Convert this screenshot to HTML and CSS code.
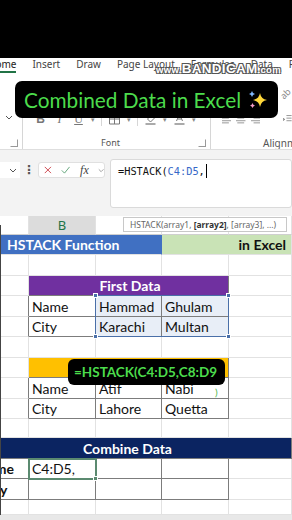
FILE: index.html
```html
<!DOCTYPE html>
<html lang="en">
<head>
<meta charset="utf-8">
<title>HSTACK Function in Excel</title>
<link rel="stylesheet" href="styles.css">
</head>
<body>
<div class="screen">

  <div class="topbar"></div>

  <nav class="tabs">
    <span class="tab on">Home</span>
    <span class="tab">Insert</span>
    <span class="tab">Draw</span>
    <span class="tab">Page Layout</span>
    <span class="tab">Formulas</span>
    <span class="tab">Data</span>
    <span class="tab">Review</span>
  </nav>
  <div class="watermark">www.<b>BANDICAM</b>.com</div>

  <div class="ribbon">
    <div class="group g-clip">
      <div class="g-top">
        <svg class="chev" width="8" height="5" viewBox="0 0 8 5"><path d="M1 1l3 3 3-3" fill="none" stroke="#555" stroke-width="1"/></svg>
      </div>
      <div class="glabel"><span class="launcher"></span></div>
    </div>
    <div class="group g-font">
      <div class="g-top">
        <div class="icons">
          <span class="ic bold">B</span>
          <span class="ic ital">I</span>
          <span class="ic undl">U</span>
          <span class="caret">&#9662;</span>
          <span class="vsep"></span>
          <svg class="ic" width="12" height="12" viewBox="0 0 12 12"><path d="M1 1h10v10H1zM6 1v10M1 6h10" fill="none" stroke="#777"/></svg>
          <span class="caret">&#9662;</span>
          <span class="vsep"></span>
          <svg class="ic" width="12" height="12" viewBox="0 0 12 12"><path d="M3 6l4-4 3 3-4 4z" fill="none" stroke="#777"/><rect x="1" y="10" width="10" height="2" fill="#aaa"/></svg>
          <span class="caret">&#9662;</span>
          <svg class="ic" width="12" height="12" viewBox="0 0 12 12"><path d="M3 8l3-7 3 7M4 6h4" fill="none" stroke="#777"/><rect x="1" y="10" width="10" height="2" fill="#aaa"/></svg>
          <span class="caret">&#9662;</span>
        </div>
      </div>
      <div class="glabel"><span class="gname">Font</span><span class="launcher"></span></div>
    </div>
    <div class="group g-align">
      <div class="g-top">
        <span class="orient">ab</span>
        <div class="icons">
          <svg width="11" height="10" viewBox="0 0 11 10"><path d="M0 1h11M0 4h8M0 7h11M0 9.5h8" stroke="#888"/></svg>
          <svg width="11" height="10" viewBox="0 0 11 10"><path d="M0 1h11M1.5 4h8M0 7h11M1.5 9.5h8" stroke="#888"/></svg>
          <svg width="11" height="10" viewBox="0 0 11 10"><path d="M0 1h11M3 4h8M0 7h11M3 9.5h8" stroke="#888"/></svg>
          <svg class="indent" width="10" height="10" viewBox="0 0 10 10"><path d="M4 1h6M4 4h6M4 7h6M0 4l2 1.5-2 1.5M2 5.5H0" fill="none" stroke="#888"/></svg>
        </div>
      </div>
      <div class="glabel"><span class="aname">Alignment</span></div>
    </div>
  </div>

  <div class="fbar">
    <div class="namebox">
      <svg width="8" height="5" viewBox="0 0 8 5"><path d="M1 1l3 3 3-3" fill="none" stroke="#555" stroke-width="1"/></svg>
    </div>
    <div class="dots">&#8942;</div>
    <div class="fxbox">
      <svg width="10" height="10" viewBox="0 0 10 10"><path d="M1 1l8 8M9 1l-8 8" stroke="#c8343c" stroke-width="1.1"/></svg>
      <svg width="12" height="10" viewBox="0 0 12 10"><path d="M1 5.5l3.5 3.5L11 1" fill="none" stroke="#4f9a6a" stroke-width="1.1"/></svg>
      <span class="fx">fx</span>
      <svg width="8" height="5" viewBox="0 0 8 5"><path d="M1 1l3 3 3-3" fill="none" stroke="#888" stroke-width="1"/></svg>
    </div>
    <div class="finput">=HSTACK(<span class="ref">C4:D5</span>,<span class="caretline"></span></div>
  </div>

  <div class="sheet">
    <div class="grid">
      <div class="hd"></div>
      <div class="hd on">B</div>
      <div class="hd"></div>
      <div class="hd"></div>
      <div class="hd"></div>

      <div class="blue">HSTACK Function</div>
      <div class="lime">in Excel</div>

      <div></div><div></div><div></div><div></div><div></div>

      <div></div>
      <div class="purple dk">First Data</div>
      <div></div>

      <div class="dr"></div>
      <div class="dk">Name</div>
      <div class="dk sel">Hammad</div>
      <div class="dk sel">Ghulam</div>
      <div></div>

      <div class="dr"></div>
      <div class="dk">City</div>
      <div class="dk sel">Karachi</div>
      <div class="dk sel">Multan</div>
      <div></div>

      <div></div><div></div><div></div><div></div><div></div>

      <div></div>
      <div class="yellow dk"></div>
      <div></div>

      <div class="dr"></div>
      <div class="dk">Name</div>
      <div class="dk">Atif</div>
      <div class="dk">Nabi</div>
      <div></div>

      <div class="dr"></div>
      <div class="dk">City</div>
      <div class="dk">Lahore</div>
      <div class="dk">Quetta</div>
      <div></div>

      <div></div><div></div><div></div><div></div><div></div>

      <div class="navy dk">Combine Data</div>

      <div class="dk strong"><span class="cut-name">Name</span></div>
      <div class="dk">C4:D5,</div>
      <div class="dk"></div>
      <div class="dk"></div>
      <div></div>

      <div class="dk strong"><span class="cut-city">City</span></div>
      <div class="dk"></div>
      <div class="dk"></div>
      <div class="dk"></div>
      <div></div>

      <div></div><div></div><div></div><div></div><div></div>
    </div>

    <div class="tip">HSTACK(array1, <b>[array2]</b>, [array3], ...)</div>
    <div class="selection"><i class="h tl"></i><i class="h tr"></i><i class="h bl"></i><i class="h br"></i></div>
    <div class="active"><i class="h br"></i></div>
    <div class="pill small">=HSTACK(C4:D5,C8:D9</div>
    <div class="paren">)</div>
  </div>
  <div class="sheetbar"></div>

  <div class="pill title">
    Combined Data in Excel
    <svg class="sparkle" width="20" height="20" viewBox="0 0 20 20">
      <path d="M12 3Q13 9 19 10Q13 11 12 17Q11 11 5 10Q11 9 12 3Z" fill="#ffd83b"/>
      <path d="M4 1Q4.5 3.5 7 4Q4.5 4.5 4 7Q3.5 4.5 1 4Q3.5 3.5 4 1Z" fill="#80b8ff"/>
      <path d="M4.5 13Q5 15 7 15.5Q5 16 4.5 18Q4 16 2 15.5Q4 15 4.5 13Z" fill="#f29ac6"/>
    </svg>
  </div>

</div>
</body>
</html>
```

FILE: styles.css
```css
body {
margin: 0;
background: #fff;
}

.screen {
position: relative;
width: 292px;
height: 520px;
overflow: hidden;
background: #fff;
font-family: Lato, "Liberation Sans", sans-serif;
color: #111;
}

.topbar {
height: 58px;
background: #000;
}

/* ribbon tabs */
.tabs {
height: 15px;
display: flex;
gap: 16px;
margin-left: -12px;
font: 10px "Noto Sans", sans-serif;
color: #444;
white-space: nowrap;
}
.tab {
line-height: 13px;
}
.tab.on {
color: #222;
border-bottom: 2px solid #217346;
}

.watermark {
position: absolute;
left: 156px;
top: 61px;
font: bold 9.5px "Liberation Sans", sans-serif;
color: #fff;
letter-spacing: 0.3px;
text-shadow: 1px 1px 0 #555, -1px -1px 0 #555, 1px -1px 0 #555, -1px 1px 0 #555;
}
.watermark b {
font-size: 13.5px;
}

.ribbon {
height: 77px;
box-sizing: border-box;
padding-top: 10px;
display: flex;
border-bottom: 1px solid #dedede;
}
.group {
display: flex;
flex-direction: column;
flex-shrink: 0;
border-right: 1px solid #d6d6d6;
box-sizing: border-box;
}
.g-clip { width: 23px; }
.g-font { width: 188px; }
.g-align {
flex: 1;
min-width: 0;
overflow: hidden;
border-right: 0;
}

.g-top {
flex: 1;
position: relative;
display: flex;
flex-direction: column;
justify-content: flex-end;
}
.glabel {
height: 13px;
display: flex;
align-items: center;
font: 9px "Noto Sans", sans-serif;
color: #555;
white-space: nowrap;
}

.chev {
margin: 0 0 16px 5px;
}
.g-clip .glabel {
justify-content: flex-end;
padding-right: 4px;
}
.launcher {
width: 6px;
height: 6px;
border: 1px solid #999;
border-top-color: transparent;
border-left-color: transparent;
}

.icons {
height: 14px;
margin-bottom: 10px;
display: flex;
align-items: center;
gap: 6px;
padding-left: 11px;
color: #777;
}
.ic {
width: 13px;
text-align: center;
font: 12px "Liberation Serif", serif;
}
.bold { font: bold 12px "Liberation Sans", sans-serif; }
.ital { font-style: italic; }
.undl { text-decoration: underline; }
.caret {
font-size: 7px;
color: #888;
}
.vsep {
width: 1px;
height: 14px;
background: #d6d6d6;
}

.gname {
flex: 1;
text-align: center;
}
.g-font .launcher {
margin-right: 4px;
}

.g-align .icons {
padding-left: 11px;
gap: 5px;
}
.g-align .indent {
margin-left: 18px;
}
.orient {
position: absolute;
right: 1px;
top: 4px;
font: 9px "Noto Sans", sans-serif;
color: #888;
transform: rotate(-45deg);
}
.aname {
padding-left: 52px;
font-size: 10px;
}

/* formula bar */
.fbar {
height: 66px;
box-sizing: border-box;
padding-top: 9px;
display: flex;
align-items: flex-start;
background: #f3f3f3;
}
.namebox {
width: 20px;
height: 16px;
margin-top: 3px;
display: flex;
align-items: center;
justify-content: center;
padding-left: 6px;
box-sizing: border-box;
background: #fff;
}
.dots {
width: 18px;
text-align: center;
font: bold 12px "DejaVu Sans", sans-serif;
color: #555;
line-height: 22px;
}
.fxbox {
width: 67px;
height: 16px;
margin-top: 3px;
box-sizing: border-box;
display: flex;
align-items: center;
gap: 9px;
padding-left: 5px;
background: #fff;
border: 1px solid #e0e0e0;
border-radius: 3px;
}
.fx {
font: italic 12px "Liberation Serif", serif;
color: #444;
margin-left: 1px;
}
.finput {
flex: 1;
margin-left: 5px;
height: 49px;
box-sizing: border-box;
padding: 4px 0 0 7px;
background: #fff;
border: 1px solid #dadada;
border-radius: 3px;
font: 10.3px "DejaVu Sans Mono", monospace;
line-height: 14px;
color: #111;
white-space: nowrap;
}
.ref {
color: #3567c8;
}
.caretline {
display: inline-block;
width: 1px;
height: 14px;
background: #000;
vertical-align: -3px;
margin-left: 1px;
}

/* worksheet */
.sheet {
position: relative;
}
.sheet::before {
content: "";
position: absolute;
left: 0;
top: 9px;
bottom: 0;
width: 1px;
background: #444;
z-index: 2;
}
.grid {
display: grid;
grid-template-columns: 29px 67px 66px 67px 63px;
grid-template-rows: 19px 20px 21px 20px 21px 20px 21px 20px 21px 20px 19px 21px 20px 21px 15px;
font-size: 14px;
}
.grid > div {
display: flex;
align-items: center;
padding-left: 3px;
white-space: nowrap;
border-right: 1px solid #e2e2e2;
border-bottom: 1px solid #e2e2e2;
}
.grid > .hd {
justify-content: center;
padding: 0;
font: 13px "Noto Sans", sans-serif;
border-bottom-color: #cfcfcf;
}
.grid > .hd.on {
background: #dcdcdc;
color: #217346;
}
.grid > .dk {
border-right-color: #7c7c7c;
border-bottom-color: #7c7c7c;
}
.grid > .dr {
border-right-color: #7c7c7c;
}
.grid > .sel {
background: #e8eef7;
}
.grid > .blue {
grid-column: span 3;
background: #4070c2;
color: #fff;
font-weight: bold;
font-size: 14px;
padding-left: 7px;
border-right-color: #4070c2;
}
.grid > .lime {
grid-column: span 2;
justify-content: flex-end;
padding-right: 5px;
background: #c9e3b6;
font-weight: bold;
font-size: 14px;
}
.grid > .purple {
grid-column: span 3;
justify-content: center;
background: #7030a0;
color: #fff;
font-weight: bold;
}
.grid > .yellow {
grid-column: span 3;
background: #ffc000;
}
.grid > .navy {
grid-column: span 5;
padding-left: 83px;
background: #0b2461;
color: #fff;
font-weight: bold;
}
.grid > .strong {
font-weight: bold;
padding-left: 0;
overflow: hidden;
}
.cut-name { margin-left: -23px; }
.cut-city { margin-left: -18px; }

.tip {
position: absolute;
left: 123px;
top: 1px;
width: 164px;
height: 15px;
box-sizing: border-box;
padding-left: 6px;
background: #fff;
border: 1px solid #c8c8c8;
font: 8.5px "Noto Sans", sans-serif;
line-height: 13px;
color: #666;
white-space: nowrap;
}
.tip b {
color: #333;
}

.selection {
position: absolute;
left: 95px;
top: 79px;
width: 134px;
height: 42px;
box-sizing: border-box;
border: 1px solid #4a6fa8;
}
.h {
position: absolute;
width: 3px;
height: 3px;
background: #4a6fa8;
border: 1px solid #fff;
}
.tl { left: -3px; top: -3px; }
.tr { right: -3px; top: -3px; }
.bl { left: -3px; bottom: -3px; }
.br { right: -3px; bottom: -3px; }

.active {
position: absolute;
left: 28px;
top: 242px;
width: 69px;
height: 22px;
box-sizing: border-box;
border: 2px solid #5b8a70;
}
.active .h {
background: #5b8a70;
}

.pill {
position: absolute;
display: flex;
align-items: center;
background: #000;
color: #4cdc4c;
white-space: nowrap;
}
.pill.title {
left: 15px;
top: 81px;
width: 263px;
height: 37px;
box-sizing: border-box;
padding-left: 9px;
border-radius: 7px;
font-size: 20.8px;
}
.sparkle {
margin-left: 7px;
}
.pill.small {
left: 68px;
top: 143px;
width: 157px;
height: 26px;
box-sizing: border-box;
padding-left: 6px;
border-radius: 6px;
font-size: 13.5px;
font-weight: bold;
}
.paren {
position: absolute;
left: 215px;
top: 170px;
font-size: 10px;
color: #4cb84c;
}

.sheetbar {
height: 5px;
background: #e8e8e8;
}
```
